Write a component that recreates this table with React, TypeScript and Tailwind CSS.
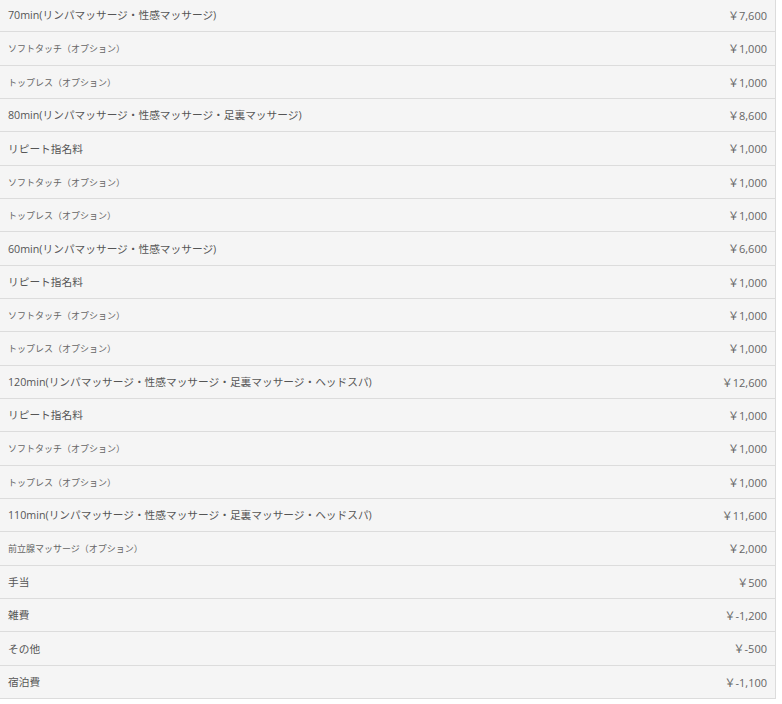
import React from "react";

type Row = { label: string; price: string; option?: boolean };

const rows: Row[] = [
  { label: "70min(リンパマッサージ・性感マッサージ)", price: "7,600" },
  { label: "ソフトタッチ（オプション）", price: "1,000", option: true },
  { label: "トップレス（オプション）", price: "1,000", option: true },
  { label: "80min(リンパマッサージ・性感マッサージ・足裏マッサージ)", price: "8,600" },
  { label: "リピート指名料", price: "1,000" },
  { label: "ソフトタッチ（オプション）", price: "1,000", option: true },
  { label: "トップレス（オプション）", price: "1,000", option: true },
  { label: "60min(リンパマッサージ・性感マッサージ)", price: "6,600" },
  { label: "リピート指名料", price: "1,000" },
  { label: "ソフトタッチ（オプション）", price: "1,000", option: true },
  { label: "トップレス（オプション）", price: "1,000", option: true },
  { label: "120min(リンパマッサージ・性感マッサージ・足裏マッサージ・ヘッドスパ)", price: "12,600" },
  { label: "リピート指名料", price: "1,000" },
  { label: "ソフトタッチ（オプション）", price: "1,000", option: true },
  { label: "トップレス（オプション）", price: "1,000", option: true },
  { label: "110min(リンパマッサージ・性感マッサージ・足裏マッサージ・ヘッドスパ)", price: "11,600" },
  { label: "前立腺マッサージ（オプション）", price: "2,000", option: true },
  { label: "手当", price: "500" },
  { label: "雑費", price: "-1,200" },
  { label: "その他", price: "-500" },
  { label: "宿泊費", price: "-1,100" },
];

export default function App() {
  return (
    <div
      className="w-[782px] h-[704px] overflow-hidden bg-white"
      style={{ fontFamily: '"Open Sans", "Noto Sans CJK JP", sans-serif' }}
    >
      <div className="w-[776px] -mt-[1px] bg-[#f5f5f5] border-r border-[#dcdcdc]">
        {rows.map((r, i) => (
          <div
            key={i}
            className="h-[33.33px] flex items-center justify-between pl-2 pr-2 pt-[1px] border-b border-[#dcdcdc] box-border"
          >
            <span
              className={
                r.option
                  ? "text-[9px] text-[#666] leading-none"
                  : "text-[10.7px] text-[#555] leading-none"
              }
            >
              {r.label}
            </span>
            <span className="text-[11px] text-[#666] leading-none">
              ￥{r.price}
            </span>
          </div>
        ))}
      </div>
    </div>
  );
}
